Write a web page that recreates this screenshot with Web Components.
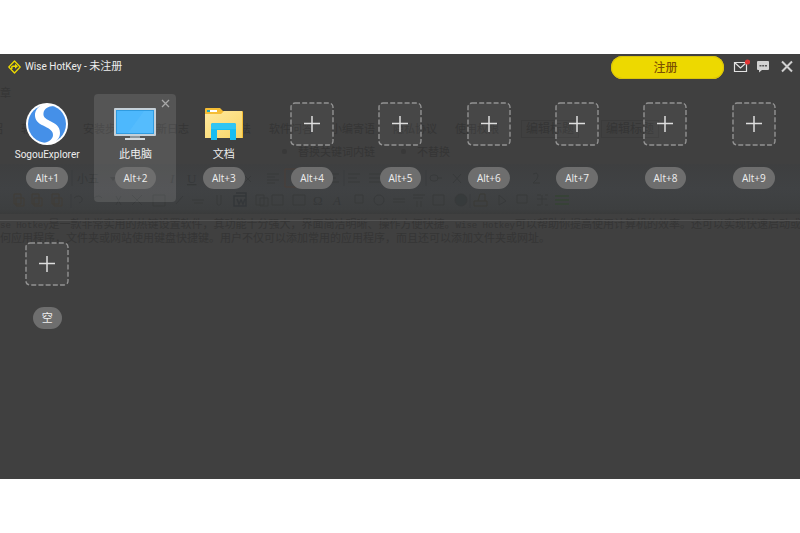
<!DOCTYPE html>
<html lang="zh-CN">
<head>
<meta charset="utf-8">
<meta name="viewport" content="width=device-width, initial-scale=1">
<title>Wise HotKey</title>
<style>
  body {
    margin: 0;
    background: #fff;
    font-family: "Open Sans", "Noto Sans CJK SC", sans-serif;
    font-size: 10px;
    color: #eee;
  }
</style>
</head>
<body>
<hotkey-window>
  <page-behind slot="behind"></page-behind>
  <title-bar slot="title">Wise HotKey - <span style="font-size: 11px">未注册</span></title-bar>
  <hotkey-row>
    <hotkey-slot key="Alt+1" label="SogouExplorer" icon="sogou"></hotkey-slot>
    <hotkey-slot key="Alt+2" label="此电脑" icon="computer" active></hotkey-slot>
    <hotkey-slot key="Alt+3" label="文档" icon="folder"></hotkey-slot>
    <hotkey-slot key="Alt+4"></hotkey-slot>
    <hotkey-slot key="Alt+5"></hotkey-slot>
    <hotkey-slot key="Alt+6"></hotkey-slot>
    <hotkey-slot key="Alt+7"></hotkey-slot>
    <hotkey-slot key="Alt+8"></hotkey-slot>
    <hotkey-slot key="Alt+9"></hotkey-slot>
  </hotkey-row>
  <hotkey-row divided>
    <hotkey-slot key="空"></hotkey-slot>
  </hotkey-row>
</hotkey-window>

<script>
const ICONS = {
  sogou: `
    <svg width="44" height="44" viewBox="0 0 44 44" aria-hidden="true">
      <circle cx="22" cy="22" r="21" fill="#fff"/>
      <circle cx="22" cy="22" r="19" fill="#4590e8"/>
      <path fill="#fff" d="M22 1.500C14 3 9.500 8 10 14C10.500 20 15 22 20 24.500C25 27 28 29 28 33C28 37 24 40 18 41.500C30 43 35 37 35 31C35 24 30 21.500 25 19C20 16.500 18 14.500 18.500 11C19 7 23 4 29 4Z"/>
    </svg>`,
  computer: `
    <svg width="44" height="44" viewBox="0 0 44 44" aria-hidden="true">
      <rect x="1" y="6" width="42" height="28" rx="1" fill="#c5d0d8"/>
      <rect x="3" y="8" width="38" height="24" fill="#2f9be0"/>
      <rect x="4" y="9" width="36" height="22" fill="#4db8fd"/>
      <path d="M31 9h9v22H15Z" fill="#5cbefd" opacity=".6"/>
      <path d="M17 34h10v2H17Z" fill="#8c979d"/>
      <path d="M12 36h20v2H12Z" fill="#d3dade"/>
    </svg>`,
  folder: `
    <svg width="44" height="44" viewBox="0 0 44 44" aria-hidden="true">
      <defs><linearGradient id="f" x2="1" y2="1"><stop stop-color="#ffeaa0"/><stop offset="1" stop-color="#f9d567"/></linearGradient></defs>
      <path d="M3 7q0-1 1-1h14l3 3h19q1 0 1 1v26H3Z" fill="#f5bd35"/>
      <path d="M3 12h16l3-3h18v27H3Z" fill="url(#f)"/>
      <path d="M5 8h3v2H5Z" fill="#21a9bd"/><path d="M8 8h7v2H8Z" fill="#fff"/>
      <path d="M9 38V23q0-2 2-2h21q2 0 2 2v15h-6V28H15v10Z" fill="#18bdf2"/>
      <path d="M11 21h21q2 0 2 2v4H9v-4q0-2 2-2Z" fill="#30c5f3"/>
    </svg>`,
  // empty place: dashed frame with a plus
  empty: `
    <svg width="44" height="44" viewBox="0 0 44 44" aria-hidden="true">
      <rect x="1" y="1" width="42" height="42" rx="4" fill="#fff" fill-opacity=".04" stroke="#929292" stroke-width="1.400" stroke-dasharray="5 2.200"/>
      <path d="M22 14v16M14 21.500h16" stroke="#dedede" stroke-width="1.500"/>
    </svg>`
};

class HotkeyWindow extends HTMLElement {
  constructor() {
    super();
    this.attachShadow({ mode: 'open' }).innerHTML = `
      <style>
        :host {
          display: flex;
          min-height: 100vh;
          box-sizing: border-box;
          padding: 54px 0;
        }
        main {
          position: relative;
          flex: 1;
          min-width: 0;
          overflow: hidden;
          background: #404040;
        }
        .front {
          position: relative;
        }
      </style>
      <main>
        <slot name="behind"></slot>
        <div class="front">
          <slot name="title"></slot>
          <slot></slot>
        </div>
      </main>
    `;
  }
}

class TitleBar extends HTMLElement {
  constructor() {
    super();
    this.attachShadow({ mode: 'open' }).innerHTML = `
      <style>
        :host {
          display: flex;
          align-items: center;
          height: 26px;
          padding: 0 6px 0 8px;
          gap: 4px;
        }
        h1 {
          flex: 1;
          margin: 0;
          font-family: Roboto, "Noto Sans CJK SC", sans-serif;
          font-size: 10px;
          font-weight: 400;
          line-height: 16px;
          white-space: nowrap;
        }
        svg { display: block; }
        button {
          padding: 0;
          border: 0;
          background: none;
          font: inherit;
          cursor: pointer;
        }
        .register {
          width: 113px;
          height: 23px;
          padding-right: 4px;
          border-radius: 12px;
          background: #edd900;
          box-shadow: inset 0 0 0 1px #d9c30a;
          color: #7d5200;
          font-size: 12px;
          font-weight: 500;
          line-height: 24px;
        }
        .tools {
          display: flex;
          align-items: center;
          gap: 6px;
          margin-left: 4px;
        }
        .close { margin-left: 4px; }
      </style>
      <svg width="13" height="14" viewBox="0 0 13 14" aria-hidden="true">
        <path d="M6.500 1L12.200 7L6.500 13L.8 7Z" fill="none" stroke="#ecd900" stroke-width="1.300" stroke-linejoin="round"/>
        <path d="M3.800 9V7.300q0-1 1-1h3" fill="none" stroke="#ecd900" stroke-width="1.500"/>
        <path d="M7 3.800L10 6.300L7 8.800Z" fill="#ecd900"/>
      </svg>
      <h1><slot></slot></h1>
      <button class="register">注册</button>
      <div class="tools">
        <button aria-label="邮件">
          <svg width="18" height="16" viewBox="0 0 18 16">
            <path d="M2.500 3.500h12v9h-12ZM2.500 3.500l6 5.500l6-5.500" fill="none" stroke="#e2e2e2" stroke-width="1.200"/>
            <circle cx="15.500" cy="3" r="2.600" fill="#e03434"/>
          </svg>
        </button>
        <button aria-label="反馈">
          <svg width="14" height="16" viewBox="0 0 14 16">
            <path d="M2 2h10q1 0 1 1v7q0 1-1 1H6l-3 2.500V11H2q-1 0-1-1V3q0-1 1-1Z" fill="#d2d2d2"/>
            <path d="M3.500 6h2v1.500h-2ZM6.200 6h2v1.500h-2ZM9 6h2v1.500H9Z" fill="#555"/>
          </svg>
        </button>
        <button class="close" aria-label="关闭">
          <svg width="14" height="16" viewBox="0 0 14 16">
            <path d="M2 2.500L12 12.500M12 2.500L2 12.500" stroke="#cfcfcf" stroke-width="2"/>
          </svg>
        </button>
      </div>
    `;
  }
}

class HotkeyRow extends HTMLElement {
  constructor() {
    super();
    this.attachShadow({ mode: 'open' }).innerHTML = `
      <style>
        :host {
          display: grid;
          grid-template-columns: repeat(9, minmax(0, 1fr));
          padding: 14px 2px 18px 3px;
          justify-items: center;
        }
        :host([divided]) {
          padding-top: 13px;
          border-top: 1px solid #545454;
        }
      </style>
      <slot></slot>
    `;
  }
}

class HotkeySlot extends HTMLElement {
  static get observedAttributes() { return ['key', 'label', 'icon']; }

  constructor() {
    super();
    this.attachShadow({ mode: 'open' });
  }

  connectedCallback() {
    this.render();
  }

  attributeChangedCallback() {
    this.render();
  }

  render() {
    const key = this.getAttribute('key') || '';
    const label = this.getAttribute('label') || '';
    const icon = ICONS[this.getAttribute('icon')] || ICONS.empty;

    this.shadowRoot.innerHTML = `
      <style>
        :host {
          display: flex;
          flex-direction: column;
          align-items: center;
          position: relative;
          box-sizing: border-box;
          width: 82px;
          height: 108px;
          padding-top: 8px;
          border-radius: 4px;
        }
        :host([active]) {
          background: rgba(255, 255, 255, .11);
        }
        svg { display: block; }
        button {
          padding: 0;
          border: 0;
          background: none;
          color: inherit;
          font: inherit;
          cursor: pointer;
        }
        .label {
          height: 18px;
          margin-bottom: 3px;
          font-family: Roboto, "Noto Sans CJK SC", sans-serif;
          font-size: ${/^[\x00-\x7f]*$/.test(label) ? 10 : 11}px;
          line-height: 18px;
          white-space: nowrap;
        }
        .key {
          height: 22px;
          padding: 0 9px;
          border-radius: 11px;
          background: #6e6e6e;
          font-size: ${/^[\x00-\x7f]*$/.test(key) ? 10 : 11}px;
          line-height: 22px;
        }
        .remove {
          position: absolute;
          top: 5px;
          right: 6px;
          display: none;
        }
        :host([active]) .remove { display: block; }
      </style>
      <button class="icon" aria-label="${label || '添加'}">${icon}</button>
      <div class="label">${label}</div>
      <button class="key">${key}</button>
      <button class="remove" aria-label="移除">
        <svg width="9" height="9" viewBox="0 0 9 9"><path d="M1 1l7 7M8 1l-7 7" stroke="#a8a8a8" stroke-width="1.300"/></svg>
      </button>
    `;
  }
}

// the editor page that shows through the dark window
class PageBehind extends HTMLElement {
  constructor() {
    super();
    this.attachShadow({ mode: 'open' }).innerHTML = `
      <style>
        :host {
          position: absolute;
          inset: 0;
          color: #353535;
          font-size: 11px;
          line-height: 12px;
          white-space: nowrap;
        }
        .head {
          height: 36px;
          padding-top: 32px;
          line-height: 14px;
        }
        .tabs {
          display: flex;
          align-items: center;
          gap: 18px;
          height: 14px;
          margin-left: -41px;
        }
        .tabs b {
          margin-left: 4px;
          padding: 2px 4px;
          border: 1px solid #3b3b3b;
          font-size: 12px;
          font-weight: 400;
        }
        .options {
          display: flex;
          gap: 26px;
          height: 28px;
          padding: 10px 0 0 282px;
          box-sizing: border-box;
        }
        .options span::before {
          content: "";
          display: inline-block;
          width: 5px;
          height: 5px;
          margin-right: 11px;
          border-radius: 50%;
          background: #393939;
          vertical-align: 2px;
        }
        .tools {
          height: 50px;
          background: linear-gradient(#3e3f40, #404244 50%, #3d3f40 90%, #3a3b3b);
        }
        .tools svg { display: block; }
        .text {
          margin: 0;
          padding-top: 3px;
          line-height: 13px;
        }
        .text span { display: block; }
        .text i {
          font: 9px "Liberation Mono", monospace;
        }
      </style>
      <div aria-hidden="true">
        <div class="head">章</div>
        <div class="tabs">
          <span>软件介绍</span><span>软件特色</span><span>安装步骤</span><span>更新日志</span><span>使用方法</span><span>软件问答</span><span>小编寄语</span><span>隐私协议</span><span>使用权限</span><b>编辑标题</b><b>编辑标题</b>
        </div>
        <div class="options"><span>替换关键词内链</span><span>不替换</span></div>
        <div class="tools">
          <svg width="600" height="50" viewBox="0 0 600 50" fill="none" stroke="#383a3b">
            <g fill="#363839" stroke="none" font-family="Liberation Serif, serif" font-size="13">
              <text x="77" y="19" font-family="Noto Sans CJK SC" font-size="11">小五</text>
              <text x="170" y="19" font-style="italic">I</text>
              <text x="187" y="19" text-decoration="underline">U</text>
              <text x="313" y="41">Ω</text>
              <text x="333" y="41" font-style="italic">A</text>
              <path d="M60 13h6l-3 4ZM110 13h6l-3 4Z"/>
            </g>
            <path d="M72 6v16M344 6v16M426 6v16M71 30v14M470 30v14" stroke="#3b3d3e"/>
            <path d="M245 12l6 6M251 12l-6 6M267 10h12M267 13h8M267 16h12M267 19h8M327 10h12M327 14h9M327 18h12M348 10h12M348 14h9M348 18h12M369 10h12M369 14h12M369 18h12"/>
            <path d="M285 5h18v18h-18Z" stroke="#4b3f38"/>
            <path d="M430 14q0-3 3-3h2q3 0 3 3t-3 3h-2q-3 0-3-3M437 14h5M453 10l8 9M461 10l-8 9M533 10q5-2 5 2q0 3-5 7h7"/>
            <path d="M14 30h7v10h-7ZM32 30h7v10h-7ZM52 30h7v10h-7ZM16 34h8v8h-8ZM34 34h8v8h-8ZM54 34h8v8h-8Z" stroke="#403c37"/>
            <path d="M74 34q5-4 8 0q1 4-3 5M94 34q5-4 8 0M116 32l5 9M121 32l-5 9M132 31l10 10M142 31l-10 10M153 31h12v11h-12ZM176 40l7-8M192 36h12M194 39h9M217 31v9q2 3 4 0v-9"/>
            <path d="M234 32h12v10h-12ZM236 29h10v3M237 35l2 5l2-4l2 4l2-5" stroke="#34373a" stroke-width="1.500"/>
            <path d="M256 31h8v10h-8ZM260 34h8v8h-8ZM272 31h11v10h-11ZM293 31h12v10h-12ZM355 31h8v8h-8Z"/>
            <circle cx="379" cy="36" r="5"/>
            <path d="M393 35h12M393 38h12M413 31h12M413 34h10M417 37v6M421 37v6M433 31h11v10h-11Z"/>
            <circle cx="461" cy="36" r="6" fill="#373b3c"/>
            <path d="M474 37h13v5h-13ZM478 37l2-7h5v7" stroke="#3a3b37"/>
            <path d="M499 31v10l7-4ZM517 31h10v8h-10ZM537 31h4M545 31h3M537 35h10M542 31v10M537 41h4M545 41h3"/>
            <path d="M555 32h14M555 36h14M555 40h14" stroke="#374237" stroke-width="2"/>
          </svg>
        </div>
        <p class="text">
          <span><i>se Hotkey</i>是一款非常实用的热键设置软件，其功能十分强大，界面简洁明晰、操作方便快捷。<i>Wise Hotkey</i>可以帮助你提高使用计算机的效率。还可以实现快速启动或快</span>
          <span>何应用程序，文件夹或网站使用键盘快捷键。用户不仅可以添加常用的应用程序，而且还可以添加文件夹或网址。</span>
        </p>
      </div>
    `;
  }
}

customElements.define('hotkey-window', HotkeyWindow);
customElements.define('title-bar', TitleBar);
customElements.define('hotkey-row', HotkeyRow);
customElements.define('hotkey-slot', HotkeySlot);
customElements.define('page-behind', PageBehind);
</script>
</body>
</html>
